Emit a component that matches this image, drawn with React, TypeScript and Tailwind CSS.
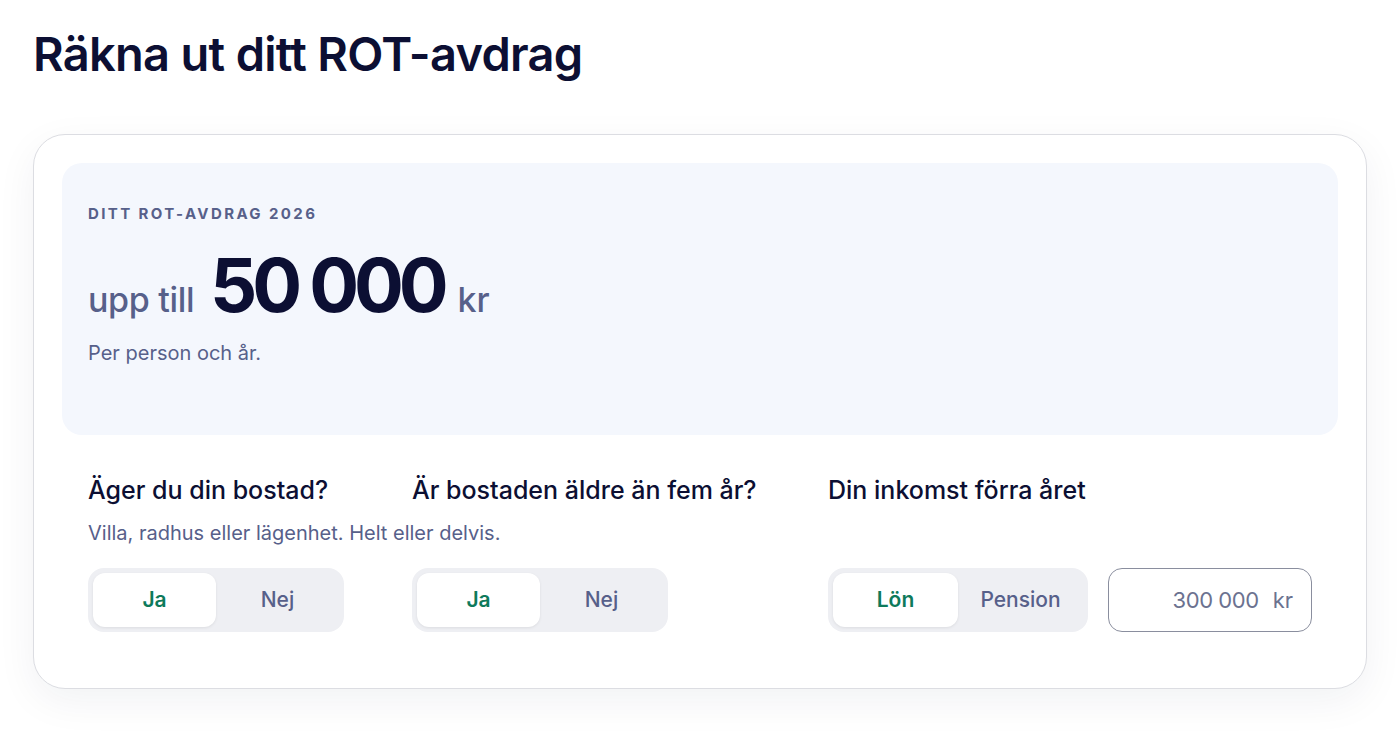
import React, { useState } from 'react';

const font = { fontFamily: 'Inter, "Open Sans", sans-serif' };

function Segmented({
  options,
  value,
  onChange,
  width,
}: {
  options: string[];
  value: string;
  onChange: (v: string) => void;
  width: string;
}) {
  return (
    <div className={`flex h-16 rounded-2xl bg-[#eeeff3] p-[5px] ${width}`}>
      {options.map(o => {
        const active = o === value;
        return (
          <button
            key={o}
            onClick={() => onChange(o)}
            className={`flex-1 rounded-xl text-[21px] ${
              active
                ? 'bg-white font-semibold text-[#0e7a5b] shadow-[0_1px_3px_rgba(0,0,0,0.08)]'
                : 'font-medium text-[#57608a]'
            }`}
          >
            {o}
          </button>
        );
      })}
    </div>
  );
}

export default function App() {
  const [owns, setOwns] = useState('Ja');
  const [old, setOld] = useState('Ja');
  const [kind, setKind] = useState('Lön');

  return (
    <div className="min-h-screen bg-white px-[33px] pt-[24px]" style={font}>
      <h1 className="text-[47px] font-semibold leading-[60px] tracking-[-0.015em] text-[#0c0f33]">
        Räkna ut ditt ROT-avdrag
      </h1>

      <div className="mt-[50px] rounded-[32px] border border-[#dcdde2] bg-white p-[28px] pb-[56px] shadow-[0_12px_40px_rgba(20,30,60,0.06)]">
        <div className="h-[272px] rounded-[20px] bg-[#f4f7fd] px-[26px] pt-[40px]">
          <div className="text-[15px] font-bold uppercase tracking-[0.16em] text-[#57608a]">
            Ditt ROT-avdrag 2026
          </div>
          <div className="mt-[11px] flex items-baseline">
            <span className="text-[34px] font-medium tracking-[-0.01em] text-[#57608a]">upp till</span>
            <span className="ml-[16px] text-[74px] font-bold leading-[96px] tracking-[-0.07em] text-[#0c0f33]">
              50 000
            </span>
            <span className="ml-[14px] text-[34px] font-medium text-[#57608a]">kr</span>
          </div>
          <div className="mt-[5px] text-[20px] text-[#57608a]">Per person och år.</div>
        </div>

        <div className="mt-[37px] flex gap-[68px] px-[26px]">
          <div className="flex w-[256px] flex-col">
            <div className="h-[34px] whitespace-nowrap text-[25px] font-medium text-[#0c0f33]">
              Äger du din bostad?
            </div>
            <div className="mt-[12px] h-[50px] whitespace-nowrap text-[20px] text-[#57608a]">
              Villa, radhus eller lägenhet. Helt eller delvis.
            </div>
            <Segmented options={['Ja', 'Nej']} value={owns} onChange={setOwns} width="w-[256px]" />
          </div>

          <div className="flex w-[348px] flex-col">
            <div className="h-[34px] whitespace-nowrap text-[25px] font-medium text-[#0c0f33]">
              Är bostaden äldre än fem år?
            </div>
            <div className="mt-[12px] h-[50px]" />
            <Segmented options={['Ja', 'Nej']} value={old} onChange={setOld} width="w-[256px]" />
          </div>

          <div className="flex flex-col">
            <div className="h-[34px] whitespace-nowrap text-[25px] font-medium text-[#0c0f33]">
              Din inkomst förra året
            </div>
            <div className="mt-[12px] h-[50px]" />
            <div className="flex gap-[20px]">
              <Segmented options={['Lön', 'Pension']} value={kind} onChange={setKind} width="w-[260px]" />
              <div className="flex h-16 w-[204px] items-center justify-end rounded-[14px] border border-[#8a8e9e] px-[18px] text-[22px] text-[#6b7290]">
                <span className="tracking-[-0.02em]">300 000</span>
                <span className="ml-[14px]">kr</span>
              </div>
            </div>
          </div>
        </div>
      </div>
    </div>
  );
}
